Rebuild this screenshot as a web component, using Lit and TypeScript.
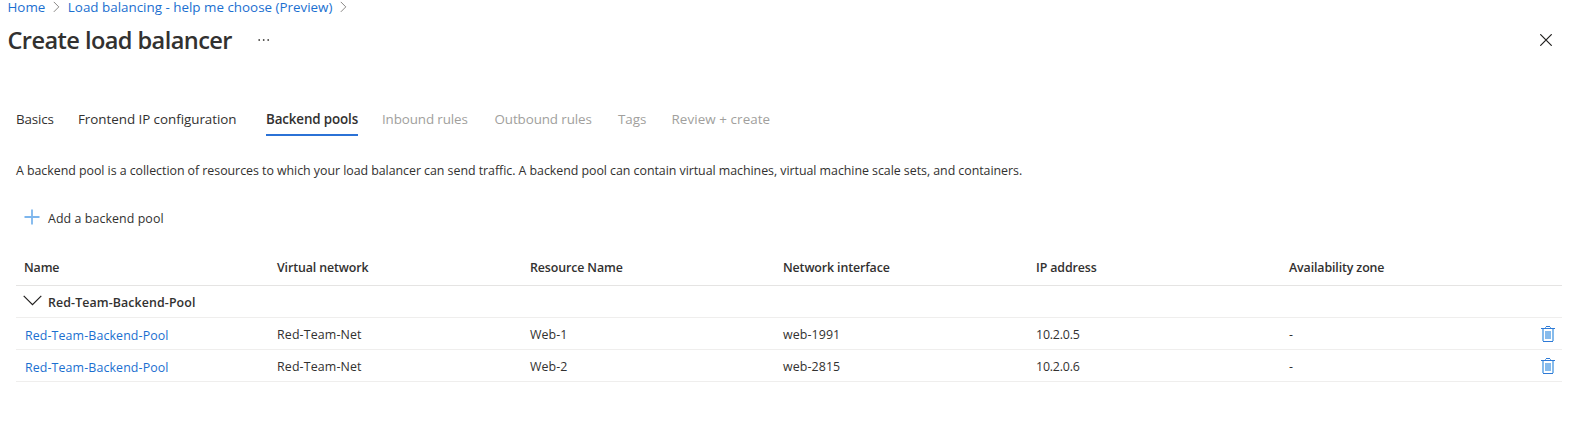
import { LitElement, html, css, svg } from "lit";
import { customElement } from "lit/decorators.js";
import { classMap } from "lit/directives/class-map.js";

interface Tab { label: string; cls: string; state?: "active" | "off"; }
interface Row { pool: string; net: string; resource: string; nic: string; ip: string; zone: string; }

const TABS: Tab[] = [
  { label: "Basics", cls: "t-basics" },
  { label: "Frontend IP configuration", cls: "t-front" },
  { label: "Backend pools", cls: "t-back", state: "active" },
  { label: "Inbound rules", cls: "t-in", state: "off" },
  { label: "Outbound rules", cls: "t-out", state: "off" },
  { label: "Tags", cls: "t-tags", state: "off" },
  { label: "Review + create", cls: "t-review", state: "off" },
];

const COLUMNS = ["Name", "Virtual network", "Resource Name", "Network interface", "IP address", "Availability zone"];

const ROWS: Row[] = [
  { pool: "Red-Team-Backend-Pool", net: "Red-Team-Net", resource: "Web-1", nic: "web-1991", ip: "10.2.0.5", zone: "-" },
  { pool: "Red-Team-Backend-Pool", net: "Red-Team-Net", resource: "Web-2", nic: "web-2815", ip: "10.2.0.6", zone: "-" },
];

const chevronRight = html`<svg class="crumb-sep" width="7" height="12" viewBox="0 0 7 12">
  <path d="M.8 .9 5.8 5.9 .8 10.9" fill="none" stroke="#8a8886" stroke-width="1"/></svg>`;

const trash = html`<svg class="trash" width="14" height="16" viewBox="0 0 14 16" shape-rendering="crispEdges">
  ${svg`<rect x="1" y="3" width="2" height="12" fill="#86bbec"/>
  <rect x="11" y="3" width="2" height="12" fill="#86bbec"/>
  <rect x="2" y="15" width="10" height="1" fill="#2f7ad6"/>
  <rect x="4" y="5" width="6" height="8" fill="#86bbec"/>
  <rect x="0" y="2" width="14" height="1" fill="#2f7ad6"/>
  <rect x="5" y="0" width="4" height="1" fill="#2f7ad6"/>
  <rect x="4" y="1" width="1" height="1" fill="#6aa9e8"/>
  <rect x="9" y="1" width="1" height="1" fill="#6aa9e8"/>`}</svg>`;

@customElement("app-root")
export class AppRoot extends LitElement {
  static styles = css`
    :host {
      display: block;
      height: 428px;
      background: #fff;
      color: #323130;
      font: 12.4px "Open Sans", "Noto Sans", sans-serif;
      white-space: nowrap;
    }
    .crumbs { display: flex; align-items: center; height: 14px; padding-left: 7.5px; font-size: 13.4px; line-height: 14px; color: #1b6fd0; }
    .crumb-sep { margin: 0 7.5px 0 8px; }
    .head { display: flex; align-items: center; box-sizing: border-box; height: 50px; padding: 2px 21px 0 7.5px; }
    .title { margin: 0; font-size: 23.6px; line-height: 30px; font-weight: 600; letter-spacing: -0.58px; }
    .more { margin-left: 26px; }
    .close { margin-left: auto; }
    .tabs { display: flex; height: 33px; margin: 39px 0 0 16px; font-size: 13.4px; }
    .tab { box-sizing: border-box; padding-top: 1px; line-height: 31px; letter-spacing: -0.04px; }
    .tab.active { font-weight: 600; border-bottom: 2px solid #2b72d6; }
    .tab.off { color: #a19f9d; }
    .tab.t-basics { width: 62px; letter-spacing: -0.16px; }
    .t-front { width: 188px; }
    .tab.t-back { width: 92px; letter-spacing: -0.14px; }
    .tab.t-in { margin-left: 24px; width: 112.5px; letter-spacing: -0.12px; }
    .tab.t-out { width: 123.5px; letter-spacing: -0.1px; }
    .t-tags { width: 53.5px; }
    .tab.t-review { letter-spacing: 0.08px; }
    .desc { margin: 25px 0 0 16px; line-height: 20px; letter-spacing: -0.04px; }
    .add { display: flex; align-items: center; height: 24px; margin: 25px 0 20px 24px; gap: 8px; letter-spacing: 0.08px; }
    .plus { margin-top: -2px; }
    .table { margin: 0 11px 0 16px; }
    .row { display: grid; grid-template-columns: repeat(5, 253px) 1fr 21px; align-items: center; box-sizing: border-box; padding-left: 8px; height: 32px; border-bottom: 1px solid #efeeed; }
    .header { height: 36px; font-weight: 600; letter-spacing: -0.12px; border-bottom-color: #e5e4e3; }
    .group { display: flex; gap: 6.5px; font-weight: 600; letter-spacing: 0.1px; }
    .group-name { padding-top: 2px; }
    .cell { padding-top: 3px; letter-spacing: 0.1px; line-height: 20px; }
    .wide { letter-spacing: 0.14px; }
    .ip { letter-spacing: -0.2px; }
    .link { color: #1b6fd0; padding: 5px 0 0 1px; letter-spacing: 0.11px; }
    .chev { margin-left: -1.5px; margin-top: -2px; }
    .trash { display: block; }
  `;

  render() {
    return html`
      <nav class="crumbs">
        <span>Home</span>${chevronRight}<span>Load balancing - help me choose (Preview)</span>${chevronRight}
      </nav>
      <header class="head">
        <h1 class="title">Create load balancer</h1>
        <svg class="more" width="12" height="4" viewBox="0 0 12 4" fill="#4a4947">
          <circle cx="1.2" cy="2" r=".9"/><circle cx="5.7" cy="2" r=".9"/><circle cx="10.2" cy="2" r=".9"/></svg>
        <svg class="close" width="12" height="12" viewBox="0 0 12 12">
          <path d="M.3 .3 11.7 11.7M11.7 .3 .3 11.7" stroke="#201f1e" stroke-width="1.2"/></svg>
      </header>
      <div class="tabs">
        ${TABS.map(t => html`<div class=${classMap({ tab: true, [t.cls]: true, active: t.state === "active", off: t.state === "off" })}>${t.label}</div>`)}
      </div>
      <p class="desc">A backend pool is a collection of resources to which your load balancer can send traffic. A backend pool can contain virtual machines, virtual machine scale sets, and containers.</p>
      <div class="add">
        <svg class="plus" width="16" height="16" viewBox="0 0 16 16"><path d="M8 .5V15.5M.5 8H15.5" stroke="#7db6ed" stroke-width="1.8"/></svg>
        <span>Add a backend pool</span>
      </div>
      <div class="table">
        <div class="row header">${COLUMNS.map(c => html`<span>${c}</span>`)}</div>
        <div class="row group">
          <svg class="chev" width="19" height="11" viewBox="0 0 19 11"><path d="M.7 .9 9.5 9.7 18.3 .9" fill="none" stroke="#201f1e" stroke-width="1.2"/></svg>
          <span class="group-name">Red-Team-Backend-Pool</span>
        </div>
        ${ROWS.map(r => html`<div class="row">
          <span class="cell wide link">${r.pool}</span>
          <span class="cell wide">${r.net}</span>
          <span class="cell">${r.resource}</span>
          <span class="cell">${r.nic}</span>
          <span class="cell ip">${r.ip}</span>
          <span class="cell">${r.zone}</span>
          ${trash}
        </div>`)}
      </div>`;
  }
}
